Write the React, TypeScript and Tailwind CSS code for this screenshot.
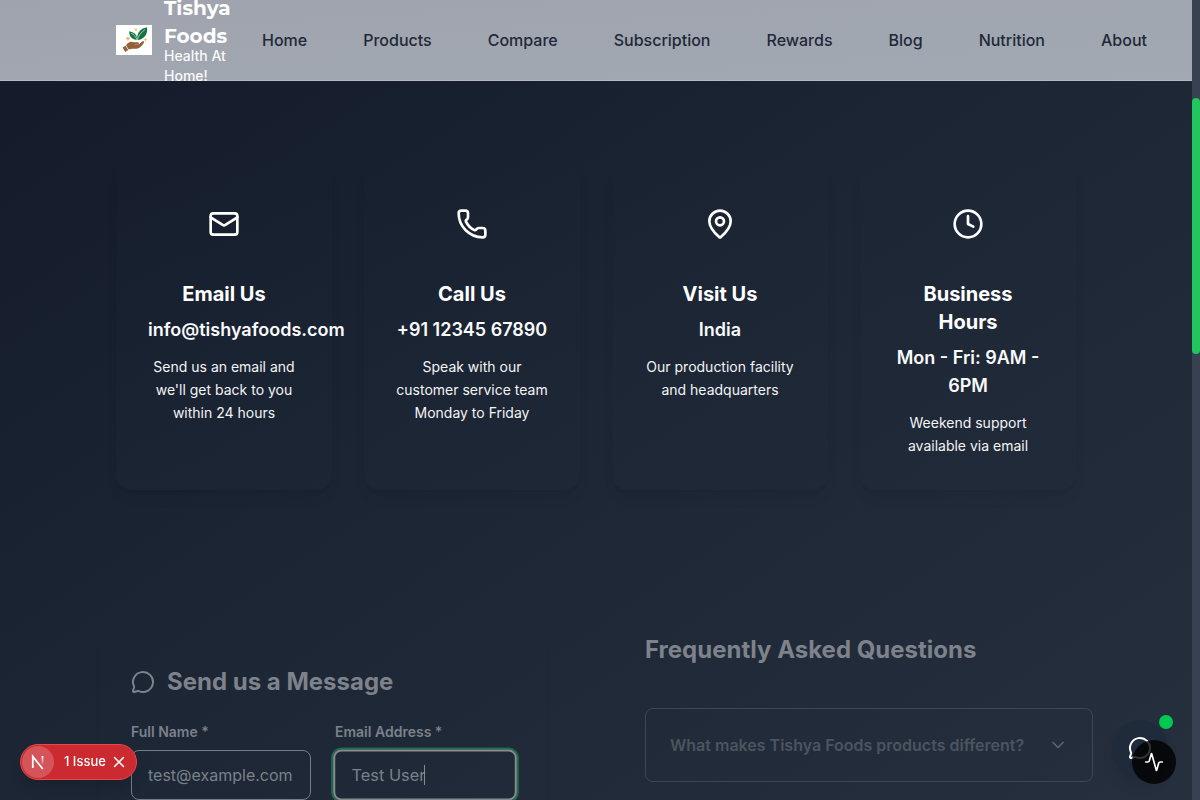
import { useId } from "react";
import { Activity, ChevronDown, Clock, Mail, MapPin, MessageCircle, Phone, X } from "lucide-react";
import type { LucideIcon } from "lucide-react";

const links = ["Home", "Products", "Compare", "Subscription", "Rewards", "Blog", "Nutrition", "About"];

type Contact = { icon: LucideIcon; title: string; value: string; text: string };

const contacts: Contact[] = [
  { icon: Mail, title: "Email Us", value: "info@tishyafoods.com", text: "Send us an email and we'll get back to you within 24 hours" },
  { icon: Phone, title: "Call Us", value: "+91 12345 67890", text: "Speak with our customer service team Monday to Friday" },
  { icon: MapPin, title: "Visit Us", value: "India", text: "Our production facility and headquarters" },
  { icon: Clock, title: "Business Hours", value: "Mon - Fri: 9AM - 6PM", text: "Weekend support available via email" },
];

function Logo() {
  return (
    <svg viewBox="0 0 36 30" className="h-[30px] w-9 shrink-0" aria-hidden="true">
      <rect width="36" height="30" fill="#fff" />
      <path d="M21 15C14.500 14 13 10 13.300 6.200C18 7 21 9.500 21.200 14C21 8 24 3.500 31 2.200C32 9 28.500 14.500 21 15Z" fill="#157340" />
      <path d="M15 8.200C18 9.500 20 11.500 21.200 15.500C22 11 25 7.500 29 4.500" fill="none" stroke="#fff" strokeWidth=".6" />
      <path d="M6.500 22.500L9.500 20.800L12.200 25L9.300 27Z" fill="#92613a" />
      <path d="M10 20.300C12 17 15 16 18 17.300H22C23.500 17.500 23.200 19.500 21.500 19.600H18.500C21 20.300 23 19.500 25 17.500C27 15.800 28.500 16.200 28 17.500C26 21 23.500 23.700 19.500 23.800C16.500 23.700 14.500 23.800 12.700 24.600Z" fill="#92613a" />
      <g fill="#f5a83a">
        <path d="M12 11l.7 1.800 1.800.7-1.800.7-.7 1.800-.7-1.800-1.800-.7 1.800-.7zM20 3l.5 1.200 1.200.5-1.200.5-.5 1.200-.5-1.200-1.200-.5 1.200-.5zM29.500 13l.5 1.200 1.200.5-1.200.5-.5 1.200-.5-1.200-1.200-.5 1.200-.5z" />
      </g>
    </svg>
  );
}

function Header() {
  return (
    <header className="h-[81px] shrink-0 border-b border-[#b5babf] bg-linear-to-br from-[#9fa3ad] to-[#a2a9b2]">
      <div className="mx-auto flex h-full max-w-[960px] items-center gap-8">
        <a href="#home" className="flex shrink-0 items-center gap-3 text-white">
          <Logo />
          <span className="flex w-[66px] flex-col">
            <span className="font-[Montserrat,Inter,sans-serif] text-xl leading-7 font-bold">Tishya Foods</span>
            <span className="-mt-1 text-sm leading-5 font-medium text-gray-50">Health At Home!</span>
          </span>
        </a>
        <nav className="flex gap-14 font-medium whitespace-nowrap text-gray-800">
          {links.map((link) => (
            <a key={link} href={`#${link.toLowerCase()}`}>{link}</a>
          ))}
        </nav>
      </div>
    </header>
  );
}

function ContactCard({ icon: Icon, title, value, text }: Contact) {
  return (
    <article className="rounded-2xl bg-linear-to-b from-transparent to-[#1f2937]/25 p-8 text-center shadow-lg shadow-black/5">
      <div className="mx-auto mb-6 flex size-16 items-center justify-center">
        <Icon className="size-8" />
      </div>
      <h3 className="mb-2 text-xl leading-7 font-bold">{title}</h3>
      <p className="mb-3 text-lg leading-7 font-semibold text-gray-50">{value}</p>
      <p className="text-sm leading-relaxed text-gray-100">{text}</p>
    </article>
  );
}

function Field({ label, value, focused }: { label: string; value: string; focused?: boolean }) {
  const id = useId();
  return (
    <div className="min-w-0">
      <label htmlFor={id} className="mb-2 block text-sm leading-5 font-semibold text-[#7b818a]">{label}</label>
      {focused ? (
        <div className="relative">
          <input id={id} defaultValue={value} className="h-[50px] w-full scale-102 rounded-lg border-2 border-[#868b92] bg-transparent px-4 text-base text-[#7b818a] ring-2 ring-[#216b48] outline-none" />
          <span className="absolute top-[15px] left-[89px] h-5 w-px bg-[#868b92]" />
        </div>
      ) : (
        <input id={id} defaultValue={value} className="h-[50px] w-full rounded-lg border border-[#777d86] bg-transparent px-4 text-base text-[#7b818a] outline-none" />
      )}
    </div>
  );
}

export default function App() {
  return (
    <div className="flex h-screen overflow-hidden bg-[#374151] font-[Inter,sans-serif] text-white">
      <div className="flex min-w-0 flex-1 flex-col overflow-hidden bg-linear-to-br from-[#131a29] via-[#1c2634] to-[#262f3e]">
        <Header />
        <main className="min-h-0 flex-1 overflow-hidden pt-[79px]">
          <section className="mx-auto grid max-w-[960px] grid-cols-4 gap-8">
            {contacts.map((contact) => (
              <ContactCard key={contact.title} {...contact} />
            ))}
          </section>
          <section className="mx-auto mt-36 grid max-w-[994px] grid-cols-2 gap-[98px]">
            <form className="rounded-2xl p-8 shadow-md shadow-black/3">
              <h2 className="mb-6 flex items-center gap-3 text-2xl leading-8 font-bold text-[#7d828b]">
                <MessageCircle className="size-6" />
                Send us a Message
              </h2>
              <div className="grid grid-cols-2 gap-6">
                <Field label="Full Name *" value="test@example.com" />
                <Field label="Email Address *" value="Test User" focused />
              </div>
            </form>
            <div>
              <h2 className="mb-[42px] text-2xl leading-8 font-bold text-[#7d828b]">Frequently Asked Questions</h2>
              <button type="button" className="flex w-full items-center justify-between rounded-lg border border-[#3d4653] p-6 text-left font-semibold text-[#4c545f]">
                What makes Tishya Foods products different?
                <ChevronDown className="size-5 text-[#5c646f]" />
              </button>
            </div>
          </section>
        </main>
      </div>
      <div className="w-2 shrink-0 pt-[98px]">
        <div className="h-64 rounded-full bg-[#22c55e]" />
      </div>

      <div className="fixed bottom-5 left-5 flex h-9 items-center rounded-full border border-[#e5484d] bg-[#ca2a30] pr-2 pl-px text-[13px] font-medium shadow-lg">
        <span className="mr-2.5 flex size-8 items-center justify-center rounded-full bg-white/20">
          <svg viewBox="0 0 16 16" className="size-4" fill="none" strokeWidth="1.800" aria-hidden="true">
            <defs>
              <linearGradient id="n-stem" x1="0" y1="2" x2="0" y2="11" gradientUnits="userSpaceOnUse">
                <stop stopColor="#fff" />
                <stop offset="1" stopColor="#fff" stopOpacity="0" />
              </linearGradient>
            </defs>
            <path d="M2.800 14V2.500L12.800 15" stroke="#fff" />
            <path d="M12.500 2V11" stroke="url(#n-stem)" />
          </svg>
        </span>
        1 Issue
        <button type="button" aria-label="Dismiss" className="ml-1">
          <X className="size-[18px]" />
        </button>
      </div>

      <button type="button" aria-label="Chat" className="fixed right-8 bottom-6 flex size-14 items-center justify-center rounded-full bg-[#1f2b3b] shadow-lg shadow-black/10">
        <MessageCircle className="size-6" />
        <span className="absolute -top-[5px] -right-[5px] size-3.5 rounded-full bg-[#00c951]" />
      </button>
      <button type="button" aria-label="Activity" className="fixed right-6 bottom-4 flex size-11 items-center justify-center rounded-full bg-black/80">
        <Activity className="size-5" />
      </button>
    </div>
  );
}
